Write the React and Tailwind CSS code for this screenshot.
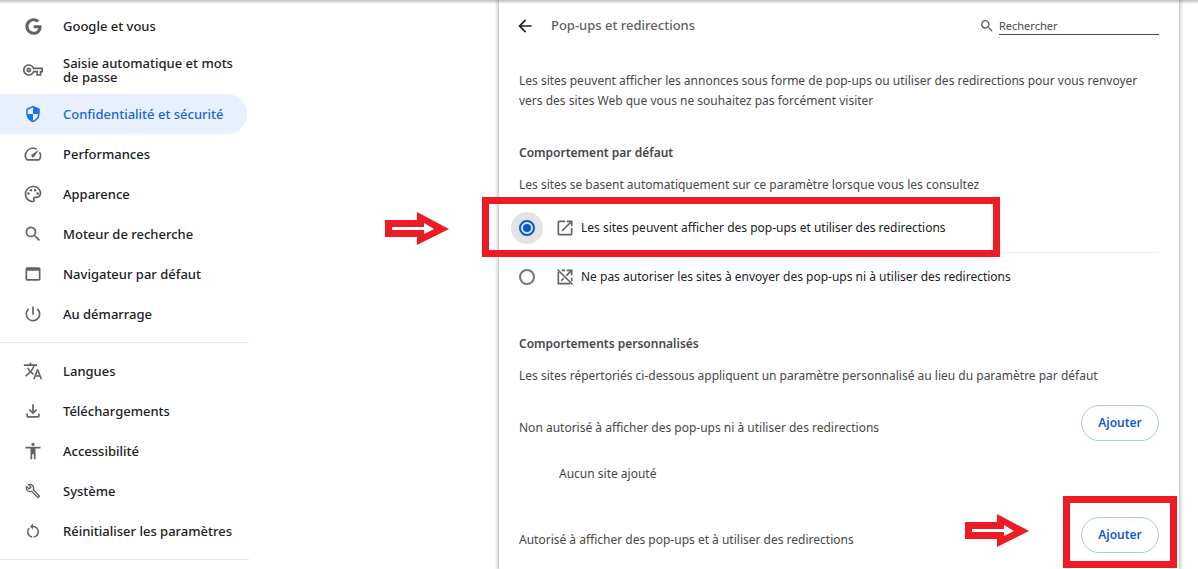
import { useState } from 'react'
import { FaGoogle } from 'react-icons/fa'
import {
  MdAccessibility,
  MdArrowBack,
  MdOpenInNew,
  MdOutlineBuild,
  MdOutlineFileDownload,
  MdOutlinePalette,
  MdOutlineVpnKey,
  MdPowerSettingsNew,
  MdRestartAlt,
  MdSearch,
  MdSecurity,
  MdTranslate,
  MdWebAsset,
} from 'react-icons/md'

function GaugeIcon({ className }) {
  return (
    <svg viewBox="0 0 24 24" fill="currentColor" className={className}>
      <path d="M20.38 8.57l-1.23 1.85a8 8 0 0 1-.22 7.58H5.07A8 8 0 0 1 15.58 6.85l1.85-1.23A10 10 0 0 0 3.35 19a2 2 0 0 0 1.72 1h13.85a2 2 0 0 0 1.74-1 10 10 0 0 0-.27-10.44zm-9.79 6.84a2 2 0 0 0 2.83 0l5.66-8.49-8.49 5.66a2 2 0 0 0 0 2.83z" />
    </svg>
  )
}

function OpenOffIcon({ className }) {
  return (
    <svg viewBox="0 0 24 24" fill="none" stroke="currentColor" strokeWidth="2" className={className}>
      <path d="M4 6v14h14M8 4h4M14 4h6v6M20 4l-6.5 6.5M10.5 13.5l-3 3M20 13v4M3 3l18 18" />
    </svg>
  )
}

const MENU = [
  { label: 'Google et vous', icon: FaGoogle, size: 'size-[17px]' },
  { label: 'Saisie automatique et mots de passe', icon: MdOutlineVpnKey },
  { label: 'Confidentialité et sécurité', icon: MdSecurity, active: true, size: 'size-[18px]' },
  { label: 'Performances', icon: GaugeIcon },
  { label: 'Apparence', icon: MdOutlinePalette },
  { label: 'Moteur de recherche', icon: MdSearch },
  { label: 'Navigateur par défaut', icon: MdWebAsset },
  { label: 'Au démarrage', icon: MdPowerSettingsNew },
]

const ADVANCED = [
  { label: 'Langues', icon: MdTranslate },
  { label: 'Téléchargements', icon: MdOutlineFileDownload },
  { label: 'Accessibilité', icon: MdAccessibility },
  { label: 'Système', icon: MdOutlineBuild, size: 'size-4' },
  { label: 'Réinitialiser les paramètres', icon: MdRestartAlt, size: 'size-[18px]' },
]

const OPTIONS = [
  {
    value: 'allow',
    label: 'Les sites peuvent afficher des pop-ups et utiliser des redirections',
    icon: MdOpenInNew,
  },
  {
    value: 'block',
    label: 'Ne pas autoriser les sites à envoyer des pop-ups ni à utiliser des redirections',
    icon: OpenOffIcon,
  },
]

function MenuGroup({ items }) {
  return (
    <ul className="border-b border-[#e8e8e8] pb-2">
      {items.map(({ label, icon: Icon, active, size = 'size-5' }) => (
        <li key={label}>
          <a
            href="#"
            className={`mr-[2px] flex items-center gap-5 rounded-r-full pr-1 pl-[23px] text-[13px] leading-[14px] font-medium ${
              active ? 'bg-[#e8f0fe] text-[#1967d2]' : 'text-[#202124]'
            } ${label.length > 30 ? 'min-h-12' : 'min-h-10'}`}
          >
            <span className={`flex w-5 shrink-0 justify-center ${active ? 'text-[#1a73e8]' : 'text-[#5f6368]'}`}>
              <Icon className={size} />
            </span>
            <span>{label}</span>
          </a>
        </li>
      ))}
    </ul>
  )
}

function Arrow({ className }) {
  return (
    <svg width="64" height="34" viewBox="0 0 64 34" className={className}>
      <path d="M0 8h32V0l32 17-32 16v-8H0z" fill="#ed1c24" />
      <path d="M7 15h32v-4l10 6-10 5v-4H7z" fill="#fff" />
    </svg>
  )
}

function AddButton() {
  return (
    <button
      type="button"
      className="h-9 w-[78px] rounded-full border border-[#a8c7fa] text-xs font-semibold text-[#1558d6]"
    >
      Ajouter
    </button>
  )
}

export default function App() {
  const [behavior, setBehavior] = useState('allow')

  return (
    <div className="relative flex h-screen justify-between overflow-hidden bg-white font-['Noto_Sans','Open_Sans',sans-serif] text-xs text-[#474747]">
      <div className="absolute inset-x-0 top-0 z-10 h-1 bg-linear-to-b from-black/25 to-transparent" />

      <nav className="w-[249px] shrink-0 pt-[6px]">
        <MenuGroup items={MENU} />
        <div className="pt-2">
          <MenuGroup items={ADVANCED} />
        </div>
      </nav>

      <main className="mr-[19px] h-full max-w-[680px] flex-1 px-5 shadow-[0_0_4px_1px_rgba(0,0,0,0.3)]">
        <header className="flex h-[52px] items-center">
          <button type="button" aria-label="Retour" className="-ml-1 text-[#202124]">
            <MdArrowBack className="size-5" />
          </button>
          <h1 className="ml-4 flex-1 text-[13px] font-medium text-[#5f5f5f]">Pop-ups et redirections</h1>
          <label htmlFor="search" aria-label="Rechercher">
            <MdSearch className="mr-1 size-4 text-[#5f6368]" />
          </label>
          <input
            id="search"
            type="search"
            placeholder="Rechercher"
            className="h-[18px] w-40 border-b border-[#474747] text-[11px] outline-none placeholder:text-[#474747]"
          />
        </header>

        <p className="pt-[19px] leading-5">
          Les sites peuvent afficher les annonces sous forme de pop-ups ou utiliser des redirections pour vous renvoyer
          vers des sites Web que vous ne souhaitez pas forcément visiter
        </p>

        <h2 className="pt-8 leading-5 font-semibold">Comportement par défaut</h2>
        <p className="pt-3 pb-[9px] leading-5">
          Les sites se basent automatiquement sur ce paramètre lorsque vous les consultez
        </p>

        {OPTIONS.map(({ value, label, icon: Icon }) => (
          <div key={value} className="relative border-[#ededed] first-of-type:border-b">
            <label className="flex h-12 items-center text-[#202124]">
              <span
                className={`-ml-2 flex size-8 items-center justify-center rounded-full ${
                  behavior === value ? 'bg-[#e3e3e3]' : ''
                }`}
              >
                <input
                  type="radio"
                  name="behavior"
                  value={value}
                  checked={behavior === value}
                  onChange={() => setBehavior(value)}
                  className="size-4 appearance-none rounded-full border-2 border-[#747775] bg-clip-content p-[2px] checked:border-[#0b57d0] checked:bg-[#0b57d0]"
                />
              </span>
              <Icon className="mr-[6px] ml-3 size-5 text-[#5f6368]" />
              {label}
            </label>
            {value === 'allow' && (
              <>
                <div className="pointer-events-none absolute -top-[7px] -left-[37px] h-[60px] w-[518px] border-[7px] border-[#ed1c24]" />
                <Arrow className="absolute top-2 -left-[134px]" />
              </>
            )}
          </div>
        ))}

        <h2 className="pt-[33px] leading-5 font-semibold">Comportements personnalisés</h2>
        <p className="pt-3 leading-5">
          Les sites répertoriés ci-dessous appliquent un paramètre personnalisé au lieu du paramètre par défaut
        </p>

        <div className="flex items-center justify-between pt-[19px]">
          <h3 className="pt-[10px]">Non autorisé à afficher des pop-ups ni à utiliser des redirections</h3>
          <AddButton />
        </div>
        <p className="pt-[23px] pb-[21px] pl-10 leading-5">Aucun site ajouté</p>

        <div className="flex items-center justify-between pt-3">
          <h3 className="pt-[10px]">Autorisé à afficher des pop-ups et à utiliser des redirections</h3>
          <div className="relative">
            <AddButton />
            <div className="pointer-events-none absolute -top-[21px] -left-[18px] h-[72px] w-[114px] border-[7px] border-[#ed1c24]" />
            <Arrow className="absolute -top-[3px] -left-[116px]" />
          </div>
        </div>
      </main>
    </div>
  )
}
